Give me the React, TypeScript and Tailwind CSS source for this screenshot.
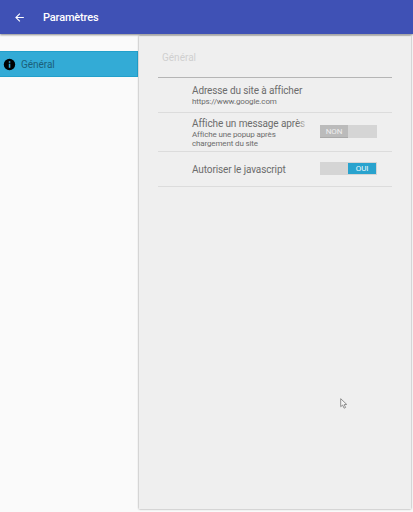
import type { ReactNode } from 'react';

function Row({ title, summary, children, className }: { title: string; summary?: ReactNode; children?: ReactNode; className: string }) {
  return (
    <div className={`flex items-center border-b border-[#dcdcdc] pl-[34px] pr-[15px] ${className}`}>
      <div className="relative w-[113px] whitespace-nowrap text-[#6c6c6c]">
        <div className="text-[10px] leading-[13px] tracking-[-0.12px]">{title}</div>
        {summary && <div className="text-[8px] leading-[9px] tracking-[-0.14px]">{summary}</div>}
        {children && <div className="absolute -right-1 top-0 h-[13px] w-3 bg-linear-to-r from-transparent to-[#efefef]" />}
      </div>
      {children}
    </div>
  );
}

function Toggle({ on }: { on: boolean }) {
  return (
    <div className={`mb-px ml-auto flex h-[13px] w-[57px] bg-[#d5d5d5] ${on ? 'justify-end p-px' : ''}`}>
      <div
        className={`flex w-7 items-center justify-center pt-px text-[8px] leading-none tracking-[-0.2px] ${
          on ? 'bg-[#29a3ce] text-[#f0fafd]' : 'border-b border-[#aaaaaa] bg-[#bbbbbb] text-[#eeeeee]'
        }`}
      >
        {on ? 'OUI' : 'NON'}
      </div>
    </div>
  );
}

export default function App() {
  return (
    <div className="relative flex h-[512px] w-[413px] flex-col overflow-hidden bg-[#fafafa] font-[Roboto,sans-serif]">
      <header className="z-10 flex h-[34px] shrink-0 items-center bg-[#3f51b5] pl-[13px] text-white shadow-[0_1px_2px_rgba(0,0,0,0.45)]">
        <svg className="size-[13px]" viewBox="0 0 24 24" fill="currentColor">
          <path d="M20 11H7.83l5.59-5.59L12 4l-8 8 8 8 1.41-1.41L7.83 13H20v-2z" />
        </svg>
        <h1 className="ml-[17px] pt-px text-[11px] font-medium leading-none tracking-[-0.15px]">Paramètres</h1>
      </header>
      <div className="flex min-h-0 flex-1">
        <aside className="w-[138px] shrink-0 pt-[17px]">
          <div className="flex h-[26px] items-center border border-l-0 border-[#22a0cb] bg-[#33abd6] pl-[3px]">
            <svg className="size-[13px]" viewBox="0 0 24 24">
              <circle cx="12" cy="12" r="10.5" fill="black" />
              <path d="M10.7 6.2h2.8v2.6h-2.8zM10.7 10.8h2.8v7h-2.8z" fill="#33abd6" />
            </svg>
            <span className="ml-[5px] pt-[2px] text-[10px] leading-none tracking-[-0.05px] text-[#1b6079]">Général</span>
          </div>
        </aside>
        <main className="mb-[3px] ml-px mr-[2px] mt-[2px] flex-1 bg-[#efefef] pl-[19px] pr-[19px] shadow-[0_0_2px_rgba(0,0,0,0.45)]">
          <h2 className="flex h-[42px] items-center border-b border-[#b5b5b5] pl-1 pt-[3px] text-[10px] leading-none text-[#d0d0d0]">Général</h2>
          <Row className="h-[35px]" title="Adresse du site à afficher" summary="https://www.google.com" />
          <Row className="h-[39px]" title="Affiche un message après" summary={<>Affiche une popup après<br />chargement du site</>}>
            <Toggle on={false} />
          </Row>
          <Row className="h-[35px]" title="Autoriser le javascript">
            <Toggle on />
          </Row>
        </main>
      </div>
      <svg className="absolute left-[340px] top-[398px] h-[11px] w-[8px]" viewBox="0 0 8 11" fill="#f5f5f5" stroke="#777777" strokeWidth="0.8">
        <path d="M.7.7v8L2.6 7l1.5 3.2 1.5-.7L4.2 6.6l2.5-.2z" />
      </svg>
    </div>
  );
}
